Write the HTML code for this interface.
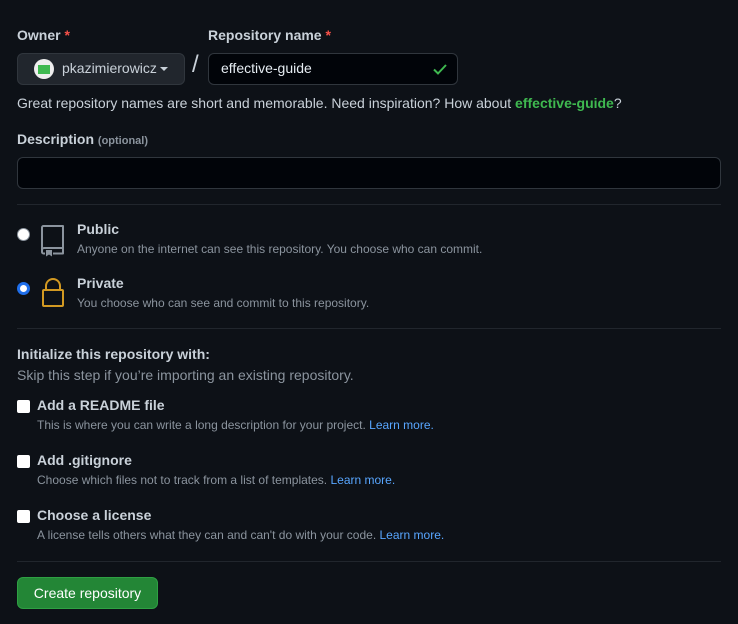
<!DOCTYPE html>
<html><head><style>
body{margin:0;background:#0d1117;color:#c9d1d9;font-family:"Liberation Sans",sans-serif;width:738px;height:624px;overflow:hidden;position:relative}
.a{position:absolute;white-space:nowrap}
.lbl{font-weight:bold;font-size:14px;color:#c9d1d9}
.req{color:#f85149}
.muted{color:#8b949e;font-size:12px}
.hr{position:absolute;left:17px;width:704px;height:1px;background:#21262d}
.cb{position:absolute;left:17px;width:13px;height:13px;background:#fff;border-radius:2px}
a{color:#58a6ff;text-decoration:none}
</style></head><body>
<div class="a lbl" style="left:17px;top:27px">Owner <span class="req">*</span></div>
<div class="a lbl" style="left:208px;top:27px">Repository name <span class="req">*</span></div>
<div class="a" style="left:17px;top:53px;width:166px;height:30px;background:#21262d;border:1px solid #30363d;border-radius:6px"></div>
<div class="a" style="left:34px;top:59px;width:20px;height:20px;border-radius:50%;background:#eee"></div>
<div class="a" style="left:38px;top:65px;width:12px;height:9px;background:#3fb950"></div>
<div class="a" style="left:62px;top:60px;font-size:14px">pkazimierowicz</div>
<div class="a" style="left:160px;top:67px;border:4px solid transparent;border-top:4px solid #c9d1d9;border-bottom:0"></div>
<div class="a" style="left:192px;top:51px;font-size:24px;font-weight:300;color:#c9d1d9">/</div>
<div class="a" style="left:208px;top:53px;width:248px;height:30px;background:#010409;border:1px solid #30363d;border-radius:6px"></div>
<div class="a" style="left:221px;top:60px;font-size:14px;color:#e6edf3">effective-guide</div>
<svg class="a" style="left:432px;top:61px" width="16" height="16" viewBox="0 0 16 16"><path d="M2 8.5l4 4 8-8.5" stroke="#3fb950" stroke-width="2" fill="none"/></svg>
<div class="a" style="left:17px;top:95px;font-size:14px">Great repository names are short and memorable. Need inspiration? How about <b style="color:#3fb950">effective-guide</b>?</div>
<div class="a lbl" style="left:17px;top:131px">Description <span style="font-size:11px;color:#8b949e">(optional)</span></div>
<div class="a" style="left:17px;top:157px;width:702px;height:30px;background:#010409;border:1px solid #30363d;border-radius:6px"></div>
<div class="hr" style="top:204px"></div>
<div class="a" style="left:17px;top:228px;width:11px;height:11px;border-radius:50%;background:#fff;border:1px solid #8b949e"></div>
<svg class="a" style="left:40px;top:224px" width="26" height="33" viewBox="0 0 26 33"><path d="M2 26V3.5A1.5 1.5 0 0 1 3.5 2H23v22H4a2 2 0 0 0-2 2v2a1.5 1.5 0 0 0 1.5 1.5H5M13 29.5h10v-5" stroke="#8b949e" stroke-width="2" fill="none" stroke-linejoin="round"/><path d="M6 26v6.5l3-2 3 2V26z" fill="#8b949e"/></svg>
<div class="a lbl" style="left:77px;top:221px">Public</div>
<div class="a muted" style="left:77px;top:242px">Anyone on the internet can see this repository. You choose who can commit.</div>
<div class="a" style="left:17px;top:282px;width:7px;height:7px;border-radius:50%;background:#fff;border:3px solid #1f6feb"></div>
<svg class="a" style="left:40px;top:278px" width="26" height="30" viewBox="0 0 26 30"><path d="M6 12V8a7 7 0 0 1 14 0v4M3 13a1 1 0 0 1 1-1h18a1 1 0 0 1 1 1v14a1 1 0 0 1-1 1H4a1 1 0 0 1-1-1z" stroke="#d29922" stroke-width="2" fill="none" stroke-linejoin="round"/></svg>
<div class="a lbl" style="left:77px;top:275px">Private</div>
<div class="a muted" style="left:77px;top:296px">You choose who can see and commit to this repository.</div>
<div class="hr" style="top:328px"></div>
<div class="a lbl" style="left:17px;top:346px">Initialize this repository with:</div>
<div class="a" style="left:17px;top:367px;font-size:14px;color:#8b949e">Skip this step if you’re importing an existing repository.</div>
<div class="cb" style="top:400px"></div>
<div class="a lbl" style="left:37px;top:397px">Add a README file</div>
<div class="a muted" style="left:37px;top:418px">This is where you can write a long description for your project. <a>Learn more.</a></div>
<div class="cb" style="top:455px"></div>
<div class="a lbl" style="left:37px;top:452px">Add .gitignore</div>
<div class="a muted" style="left:37px;top:473px">Choose which files not to track from a list of templates. <a>Learn more.</a></div>
<div class="cb" style="top:510px"></div>
<div class="a lbl" style="left:37px;top:507px">Choose a license</div>
<div class="a muted" style="left:37px;top:528px">A license tells others what they can and can't do with your code. <a>Learn more.</a></div>
<div class="hr" style="top:561px"></div>
<div class="a" style="left:17px;top:577px;width:139px;height:30px;background:#238636;border:1px solid #2ea043;border-radius:6px;color:#fff;font-size:14px;text-align:center;line-height:30px">Create repository</div>
</body></html>
